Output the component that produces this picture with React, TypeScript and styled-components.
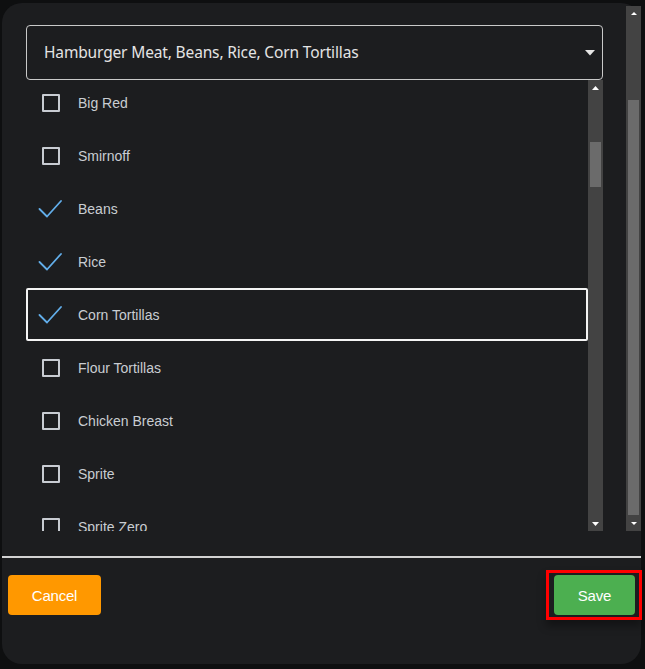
import React from "react";
import styled, { createGlobalStyle } from "styled-components";

const Global = createGlobalStyle`
  html, body { margin: 0; padding: 0; background: #0e0f10; }
  body { width: 645px; height: 669px; overflow: hidden; font-family: "Liberation Sans", Arial, sans-serif; }
  * { box-sizing: border-box; }
`;

const Page = styled.div`
  width: 645px;
  height: 669px;
  padding: 3px 4px 5px 2px;
`;

const Dialog = styled.div`
  width: 639px;
  height: 661px;
  background: #1c1d1f;
  border-radius: 20px;
  display: flex;
  flex-direction: column;
`;

const TopArea = styled.div`
  height: 528px;
  display: flex;
  flex-direction: row;
`;

const Content = styled.div`
  flex: 1;
  padding: 22px 22px 0 24px;
  display: flex;
  flex-direction: column;
  overflow: hidden;
`;

const SelectBox = styled.div`
  width: 577px;
  height: 55px;
  border: 1px solid #c9c9c9;
  border-radius: 4px;
  display: flex;
  align-items: center;
  padding: 0 6px 0 17px;
  flex-shrink: 0;
`;

const SelectText = styled.span`
  flex: 1;
  font-family: "Noto Sans", "Open Sans", sans-serif;
  font-size: 15.5px;
  color: #e4e4e4;
  letter-spacing: -0.15px;
  padding-bottom: 2px;
`;

const Caret = styled.svg`
  width: 10px;
  height: 6px;
  margin-right: 1px;
`;

const ListWrap = styled.div`
  width: 577px;
  height: 451px;
  display: flex;
  flex-direction: row;
  overflow: hidden;
`;

const Items = styled.div`
  flex: 1;
  display: flex;
  flex-direction: column;
  margin-top: -4px;
`;

const Item = styled.div<{ $focused?: boolean }>`
  height: 53px;
  flex-shrink: 0;
  display: flex;
  align-items: center;
  padding-left: 14px;
  border: 2px solid ${(p) => (p.$focused ? "#f4f4f4" : "transparent")};
  border-radius: 2px;
`;

const Box = styled.span`
  width: 18px;
  height: 18px;
  border: 2px solid #c8ccd2;
  border-radius: 1px;
  flex-shrink: 0;
`;

const CheckWrap = styled.span`
  width: 18px;
  height: 18px;
  flex-shrink: 0;
  display: flex;
  align-items: center;
  justify-content: center;
  overflow: visible;
`;

const Label = styled.span`
  margin-left: 18px;
  font-size: 14px;
  color: #c9cdd2;
`;

const Bar = styled.div<{ $w: number; $mt?: number }>`
  width: ${(p) => p.$w}px;
  flex-shrink: 0;
  margin-top: ${(p) => p.$mt ?? 0}px;
  background: #434343;
  display: flex;
  flex-direction: column;
`;

const Arrow = styled.div`
  height: 15px;
  display: flex;
  align-items: center;
  justify-content: center;
  flex-shrink: 0;
`;

const Track = styled.div`
  flex: 1;
  display: flex;
  flex-direction: column;
  align-items: center;
`;

const Thumb = styled.div`
  width: 11px;
  background: #6b6b6b;
  flex-shrink: 0;
`;

const Separator = styled.div`
  height: 2px;
  margin-top: 25px;
  background: #d2d2d2;
  flex-shrink: 0;
`;

const Footer = styled.div`
  display: flex;
  justify-content: space-between;
  align-items: flex-start;
  padding: 17px 6px 0 6px;
`;

const FocusRing = styled.div`
  border: 3px solid #ff0000;
  padding: 2px 4px 2px 5px;
  margin: -5px -7px -5px 0;
  box-shadow: 0 6px 8px rgba(0, 0, 0, 0.35);
  display: flex;
`;

const Button = styled.button<{ $color: string }>`
  height: 40px;
  border: none;
  border-radius: 4px;
  background: ${(p) => p.$color};
  color: #ffffff;
  font-family: "Liberation Sans", Arial, sans-serif;
  font-size: 15px;
  letter-spacing: -0.2px;
  padding: 0;
  cursor: pointer;
  outline: none;
`;

const Tri = ({ up, w, h }: { up?: boolean; w: number; h: number }) => (
  <svg width={w} height={h} viewBox={`0 0 ${w} ${h}`}>
    <polygon
      points={up ? `0,${h} ${w},${h} ${w / 2},0` : `0,0 ${w},0 ${w / 2},${h}`}
      fill="#ffffff"
    />
  </svg>
);

const Scrollbar = ({
  w,
  mt,
  thumbTop,
  thumbHeight,
  aw,
  ah,
}: {
  w: number;
  mt?: number;
  thumbTop: number;
  thumbHeight: number;
  aw: number;
  ah: number;
}) => (
  <Bar $w={w} $mt={mt}>
    <Arrow>
      <Tri up w={aw} h={ah} />
    </Arrow>
    <Track>
      <Thumb style={{ marginTop: thumbTop, height: thumbHeight }} />
    </Track>
    <Arrow>
      <Tri w={aw} h={ah} />
    </Arrow>
  </Bar>
);

const Check = () => (
  <svg width="24" height="24" viewBox="0 0 24 24" style={{ flexShrink: 0, margin: "0 -3px 0 -5px" }}>
    <polyline
      points="1.5,12 9,19.5 23,4"
      fill="none"
      stroke="#62aeea"
      strokeWidth="1.8"
      strokeLinecap="round"
      strokeLinejoin="round"
    />
  </svg>
);

const items: { name: string; checked: boolean; focused?: boolean }[] = [
  { name: "Big Red", checked: false },
  { name: "Smirnoff", checked: false },
  { name: "Beans", checked: true },
  { name: "Rice", checked: true },
  { name: "Corn Tortillas", checked: true, focused: true },
  { name: "Flour Tortillas", checked: false },
  { name: "Chicken Breast", checked: false },
  { name: "Sprite", checked: false },
  { name: "Sprite Zero", checked: false },
];

export default function App() {
  return (
    <>
      <Global />
      <Page>
        <Dialog>
          <TopArea>
            <Content>
              <SelectBox>
                <SelectText>Hamburger Meat, Beans, Rice, Corn Tortillas</SelectText>
                <Caret viewBox="0 0 10 6">
                  <polygon points="0,0 10,0 5,5.5" fill="#e6e6e6" />
                </Caret>
              </SelectBox>
              <ListWrap>
                <Items>
                  {items.map((it) => (
                    <Item key={it.name} $focused={it.focused}>
                      {it.checked ? (
                        <CheckWrap>
                          <Check />
                        </CheckWrap>
                      ) : (
                        <Box />
                      )}
                      <Label>{it.name}</Label>
                    </Item>
                  ))}
                </Items>
                <Scrollbar w={15} thumbTop={47} thumbHeight={45} aw={7} ah={4} />
              </ListWrap>
            </Content>
            <Scrollbar w={15} mt={3} thumbTop={79} thumbHeight={415} aw={6} ah={3} />
          </TopArea>
          <Separator />
          <Footer>
            <Button $color="#ff9800" style={{ width: 93 }}>
              Cancel
            </Button>
            <FocusRing>
              <Button $color="#4caf50" style={{ width: 81 }}>
                Save
              </Button>
            </FocusRing>
          </Footer>
        </Dialog>
      </Page>
    </>
  );
}
